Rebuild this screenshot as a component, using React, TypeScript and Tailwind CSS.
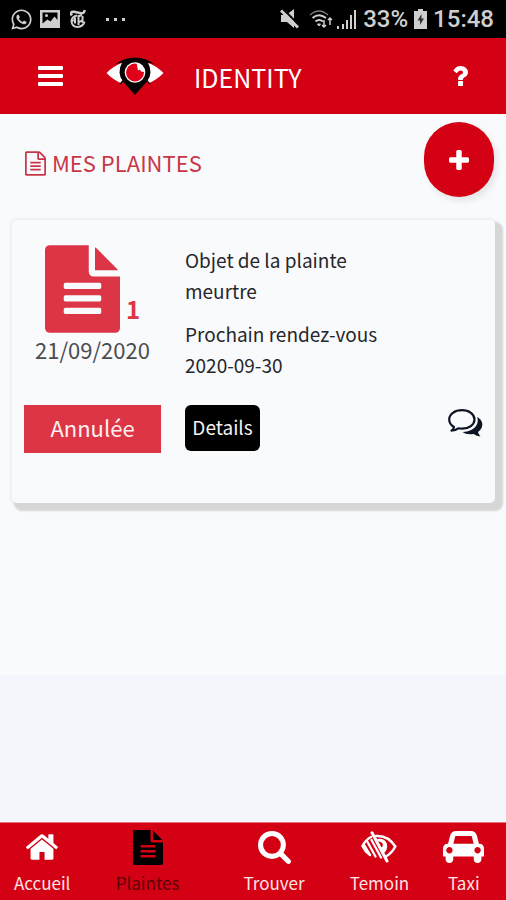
import type { ReactNode } from 'react';
import { FaWhatsapp } from 'react-icons/fa';

type IconProps = { className?: string };

const FILE_PATH =
  'M1596 476q14 14 28 36h-472v-472q22 14 36 28zm-476 164h544v1056q0 40-28 68t-68 28h-1344q-40 0-68-28t-28-68v-1600q0-40 28-68t68-28h800v544q0 40 28 68t68 28zm160 736v-64q0-14-9-23t-23-9h-704q-14 0-23 9t-9 23v64q0 14 9 23t23 9h704q14 0 23-9t9-23zm0-256v-64q0-14-9-23t-23-9h-704q-14 0-23 9t-9 23v64q0 14 9 23t23 9h704q14 0 23-9t9-23zm0-256v-64q0-14-9-23t-23-9h-704q-14 0-23 9t-9 23v64q0 14 9 23t23 9h704q14 0 23-9t9-23z';

function Glyph({ box, d, className }: { box: string; d: string; className?: string }) {
  return (
    <svg viewBox={box} className={className} fill="currentColor" aria-hidden="true">
      <path d={d} />
    </svg>
  );
}

const FileIcon = ({ className }: IconProps) => <Glyph className={className} box="128 0 1536 1792" d={FILE_PATH} />;

const FileOutlineIcon = ({ className }: IconProps) => (
  <Glyph
    className={className}
    box="128 0 1536 1792"
    d="M1596 380q28 28 48 76t20 88v1152q0 40-28 68t-68 28h-1344q-40 0-68-28t-28-68v-1600q0-40 28-68t68-28h896q40 0 88 20t76 48zm-444-244v376h376q-10-29-22-41l-313-313q-12-12-41-22zm384 1528v-1024h-416q-40 0-68-28t-28-68v-416h-768v1536h1280zm-1024-864q0-14 9-23t23-9h704q14 0 23 9t9 23v64q0 14-9 23t-23 9h-704q-14 0-23-9t-9-23v-64zm736 224q14 0 23 9t9 23v64q0 14-9 23t-23 9h-704q-14 0-23-9t-9-23v-64q0-14 9-23t23-9h704zm0 256q14 0 23 9t9 23v64q0 14-9 23t-23 9h-704q-14 0-23-9t-9-23v-64q0-14 9-23t23-9h704z"
  />
);

const HomeIcon = ({ className }: IconProps) => (
  <Glyph
    className={className}
    box="90 250 1612 1290"
    d="M1472 992v480q0 26-19 45t-45 19h-384v-384h-256v384h-384q-26 0-45-19t-19-45v-480q0-1 .5-3t.5-3l575-474 575 474q1 2 1 6zm223-69l-62 74q-8 9-21 11h-3q-13 0-21-7l-692-577-692 577q-12 8-24 7-13-2-21-11l-62-74q-8-10-7-23.5t11-21.5l719-599q32-26 76-26t76 26l244 204v-195q0-14 9-23t23-9h192q14 0 23 9t9 23v408l219 182q10 8 11 21.5t-7 23.5z"
  />
);

const SearchIcon = ({ className }: IconProps) => (
  <Glyph
    className={className}
    box="64 128 1664 1664"
    d="M1216 832q0-185-131.5-316.5t-316.5-131.5-316.5 131.5-131.5 316.5 131.5 316.5 316.5 131.5 316.5-131.5 131.5-316.5zm512 832q0 52-38 90t-90 38q-54 0-90-38l-343-342q-179 124-399 124-143 0-273.5-55.5t-225-150-150-225-55.5-273.5 55.5-273.5 150-225 225-150 273.5-55.5 273.5 55.5 225 150 150 225 55.5 273.5q0 220-124 399l343 343q37 37 37 90z"
  />
);

const LowVisionIcon = ({ className }: IconProps) => (
  <svg viewBox="0 0 36 32" className={className} fill="none" stroke="currentColor" strokeLinecap="round" aria-hidden="true">
    <path strokeWidth="2.500" d="M10 6Q4.500 9 1.500 15Q4 20.500 9 24" />
    <path strokeWidth="2.500" d="M15 5Q27 4 34.300 15.500Q31 22 25 25.500" />
    <path strokeWidth="3" d="M11 1.800L26 30" />
    <path strokeWidth="2.300" d="M10.500 9L20 26.500M6.500 11L14.500 25.500M3.500 14.500L8.500 23" />
    <path fill="currentColor" stroke="none" d="M16 8Q24 7 26 13Q27 20 22 22.500L19 17Q23 16 21.500 12.500Q20 10 17 10.500Z" />
  </svg>
);

const CarIcon = ({ className }: IconProps) => (
  <Glyph
    className={className}
    box="0 128 2048 1600"
    d="M480 1088q0-66-47-113t-113-47-113 47-47 113 47 113 113 47 113-47 47-113zm36-320h1016l-89-357q-2-8-14-17.5t-21-9.5h-768q-9 0-21 9.5t-14 17.5zm1372 320q0-66-47-113t-113-47-113 47-47 113 47 113 113 47 113-47 47-113zm160-96v384q0 14-9 23t-23 9h-96v128q0 80-56 136t-136 56-136-56-56-136v-128h-1024v128q0 80-56 136t-136 56-136-56-56-136v-128h-96q-14 0-23-9t-9-23v-384q0-93 65.5-158.5t158.5-65.5h28l105-419q23-94 104-157.5t179-63.5h768q98 0 179 63.5t104 157.5l105 419h28q93 0 158.5 65.5t65.5 158.5z"
  />
);

const PlusIcon = ({ className }: IconProps) => (
  <Glyph
    className={className}
    box="192 128 1408 1408"
    d="M1600 736v192q0 40-28 68t-68 28h-416v416q0 40-28 68t-68 28h-192q-40 0-68-28t-28-68v-416h-416q-40 0-68-28t-28-68v-192q0-40 28-68t68-28h416v-416q0-40 28-68t68-28h192q40 0 68 28t28 68v416h416q40 0 68 28t28 68z"
  />
);

const HelpIcon = ({ className }: IconProps) => (
  <Glyph
    className={className}
    box="445 256 960 1280"
    d="M1088 1256v240q0 16-12 28t-28 12h-240q-16 0-28-12t-12-28v-240q0-16 12-28t28-12h240q16 0 28 12t12 28zm316-600q0 54-15.5 101t-35 76.5-55 59.5-57.5 43.5-61 35.5q-41 23-68.5 65t-27.5 67q0 17-12 32.5t-28 15.5h-240q-15 0-25.5-18.5t-10.5-37.5v-45q0-83 65-156.5t143-108.5q59-27 84-56t25-76q0-42-46.5-74t-107.5-32q-65 0-108 29-35 25-107 115-13 16-31 16-12 0-25-8l-164-125q-13-10-15.5-25t5.5-28q160-266 464-266 80 0 161 31t146 83 106 127.5 41 158.5z"
  />
);

const BarsIcon = ({ className }: IconProps) => (
  <svg viewBox="0 0 25 20" className={className} fill="currentColor" aria-hidden="true">
    <rect width="25" height="4" rx="1" />
    <rect y="8" width="25" height="4" rx="1" />
    <rect y="16" width="25" height="4" rx="1" />
  </svg>
);

const EyeLogo = ({ className }: IconProps) => (
  <svg viewBox="0 0 58 38" className={className} role="img" aria-label="Identity">
    <path d="M.5 16Q8 8.500 17 5.500V27Q7 23 .5 16ZM57.500 16Q50 8.500 41 5.500V27Q51 23 57.500 16Z" fill="#fff" />
    <path d="M14 27.200L17 22L22 30ZM44 27.200L41 22L36 30Z" fill="#d40013" />
    <path
      d="M9 7.500Q18 .5 29 .5T49 7.500Q45.500 6 42 5.800Q44.500 10 44.500 15.500Q44.300 20.500 41 24.500L29 38L17 24.500Q13.700 20.500 13.500 15.500Q13.500 10 16 5.800Q12.500 6 9 7.500Z"
      fill="#080405"
    />
    <path d="M14 27L17 24M44 27L41 24" stroke="#080405" strokeWidth="1.200" />
    <circle cx="29" cy="15.500" r="10.300" fill="#fff" />
    <circle cx="29" cy="15.500" r="9" fill="#e00018" />
    <path d="M30.500 5.500L32 13.500L34 12.500L35 14.500L39 15A10 10 0 0 0 30.500 5.500Z" fill="#fff" />
  </svg>
);

const ChatIcon = ({ className }: IconProps) => (
  <svg viewBox="0 0 35 28" className={className} aria-hidden="true">
    <path
      d="M14 1.200C6.800 1.200 1.200 5.200 1.200 10.500C1.200 13.500 3 16.200 6 18Q5.500 20.300 3.500 21.700Q7.500 21.500 10.300 19.300Q12 19.700 14 19.700C21 19.700 26.500 15.600 26.500 10.500C26.500 5.200 21 1.200 14 1.200Z"
      fill="none"
      stroke="#0c1424"
      strokeWidth="2.200"
      strokeLinejoin="round"
    />
    <path
      d="M29 8C33 10 34.500 13 34.300 16Q34 20 30 23Q30.500 25.700 32.500 27.500Q28.500 27.300 25.700 25Q18 26 14.500 23C22 23 29.500 19 29.800 11.500Q29.800 9.500 29 8Z"
      fill="#0c1424"
    />
  </svg>
);

function StatusBar() {
  return (
    <div className="flex h-[38px] items-center bg-black pl-[10px] pr-3 text-[#cfcfcf]">
      <FaWhatsapp className="size-[23px]" />
      <svg viewBox="0 0 20 18" className="ml-[7px] h-[18px] w-5" aria-hidden="true">
        <path fill="currentColor" fillRule="evenodd" d="M0 0h20v18H0zM2.500 2.500v11l5-4 3 2 4-5 3 3.500V2.500z" />
        <circle cx="6.500" cy="5.500" r="1.500" fill="currentColor" />
      </svg>
      <svg viewBox="0 0 16 18" className="ml-[10px] h-[18px] w-4" fill="none" stroke="currentColor" aria-hidden="true">
        <path d="M1.800 5.500Q-.5 1.500 4 1.800L11 3.300Q14.500 3.500 14.500 0" strokeWidth="2.600" />
        <path d="M7 5.500Q1.500 7 1.500 11.500Q2 16.800 7.500 17Q13.500 16.500 14.500 11.500" strokeWidth="2" />
        <path d="M5 7.500v6M8.500 5v10M8.500 6.500l3.500-1.800M12.500 6v7M8.500 12.500l4-2.500" strokeWidth="2" />
        <path d="M1.500 11.500l4-2" strokeWidth="1.500" />
      </svg>
      <span className="ml-5 flex gap-[5px]">
        <i className="size-[3px] bg-current" />
        <i className="size-[3px] bg-current" />
        <i className="size-[3px] bg-current" />
      </span>
      <svg viewBox="0 0 19 20" className="ml-auto h-5 w-[19px]" aria-hidden="true">
        <path fill="currentColor" d="M1 6h5l8-6v19l-7-6H1z" />
        <path stroke="#000" strokeWidth="2" d="M3 0l17 17" />
        <path stroke="currentColor" strokeWidth="3" d="M1 1.500l17 17" />
      </svg>
      <svg viewBox="0 0 24 20" className="ml-[10px] h-5 w-6" fill="none" stroke="currentColor" aria-hidden="true">
        <path strokeWidth="1.500" opacity=".6" d="M1 6Q10-2 19 6" />
        <path strokeWidth="2" d="M3.500 9Q10 3.500 17 9M6.500 12.500Q10 9.500 14 12.500" />
        <path fill="currentColor" d="M8.500 15h3L10 17z" />
        <path strokeWidth="1.500" d="M15 11v7M13 16l2 2 2-2M21 16V9M19 11l2-2 2 2" />
      </svg>
      <svg viewBox="0 0 20 20" className="ml-1 h-5 w-5" fill="currentColor" aria-hidden="true">
        <path d="M0 20v-3h2v3zM5 20v-5h2v5zM9 20v-9h2v9zM13 20V6h2v14zM17 20V1h2v19z" />
      </svg>
      <span className="ml-[6px] font-['Roboto',sans-serif] text-[24px] font-medium leading-[38px]">33%</span>
      <svg viewBox="0 0 13 20" className="ml-[6px] h-5 w-[13px]" aria-hidden="true">
        <path fill="currentColor" d="M4 0h5v2h4v18H0V2h4z" />
        <path fill="#333" d="M7.500 5L3.500 11.500h2.500v4.500l4-6.500H7.500z" />
      </svg>
      <span className="ml-[6px] font-['Roboto',sans-serif] text-[24px] font-medium leading-[38px]">15:48</span>
    </div>
  );
}

function NavItem({ label, icon, span, active }: { label: string; icon: ReactNode; span: string; active?: boolean }) {
  return (
    <a
      href="#"
      aria-current={active ? 'page' : undefined}
      className={`${span} flex flex-col items-center ${active ? 'text-black' : 'text-white'}`}
    >
      <span className="flex h-12 items-center justify-center">{icon}</span>
      <span className={`text-[17px] leading-6 ${active ? 'text-[#5c0009]' : 'text-[#ffe3e5]'}`}>{label}</span>
    </a>
  );
}

export default function App() {
  return (
    <div className="flex min-h-screen flex-col bg-[#f5f6fb] font-['Noto_Sans_CJK_SC',sans-serif]">
      <StatusBar />
      <header className="flex h-[76px] items-center bg-[#d40013] pl-[38px] pr-[38px] text-white">
        <button type="button" aria-label="Menu">
          <BarsIcon className="h-5 w-[25px]" />
        </button>
        <EyeLogo className="ml-[43px] h-[38px] w-[58px]" />
        <h1 className="ml-[30px] pt-[2px] text-[25px] leading-9">IDENTITY</h1>
        <button type="button" aria-label="Aide" className="ml-auto">
          <HelpIcon className="h-5 w-[15px]" />
        </button>
      </header>

      <main className="h-[561px] bg-[#f9fafc]">
        <div className="flex items-center justify-between pl-[25px] pr-3 pt-2">
          <h2 className="flex items-center gap-[6px] pt-2 text-[22px] leading-8 text-[#c9364a]">
            <FileOutlineIcon className="h-[25px] w-[21px]" />
            <span className="pb-1">MES PLAINTES</span>
          </h2>
          <button
            type="button"
            aria-label="Ajouter une plainte"
            className="flex h-[75px] w-[70px] items-center justify-center rounded-[35px] bg-[#d40013] text-white shadow-[3px_4px_6px_#e4e4e6]"
          >
            <PlusIcon className="size-5" />
          </button>
        </div>

        <article className="ml-3 mr-[11px] mt-[23px] rounded-[5px] bg-[#f9fafc] px-3 pb-[50px] pt-6 shadow-[5px_5px_2px_3px_#d6d6d7,0_0_4px_#dedfe0]">
          <div className="grid grid-cols-[137px_1fr] gap-x-6">
            <div className="flex flex-col items-center pt-px">
              <div className="flex items-end gap-[6px] text-[#dc3545]">
                <FileIcon className="h-[88px] w-[75px]" />
                <span className="pb-2 text-[24px] font-bold leading-8">1</span>
              </div>
              <time className="text-[22px] leading-8 text-[#4b4c50]">21/09/2020</time>
            </div>
            <dl className="text-[19px] leading-[31px] text-[#26272b]">
              <dt>Objet de la plainte</dt>
              <dd className="mb-3">meurtre</dd>
              <dt>Prochain rendez-vous</dt>
              <dd>2020-09-30</dd>
            </dl>
          </div>
          <div className="mt-[25px] grid grid-cols-[137px_1fr] items-start gap-x-6">
            <span className="bg-[#dc3545] pb-1 text-center text-[22px] leading-[44px] text-[#fff0f1]">Annulée</span>
            <div className="flex items-start justify-between">
              <button type="button" className="h-[46px] w-[75px] rounded-[6px] bg-black pb-[2px] text-[19px] text-[#f2f2f2]">
                Details
              </button>
              <button type="button" aria-label="Messages" className="mt-1">
                <ChatIcon className="h-7 w-[35px]" />
              </button>
            </div>
          </div>
        </article>
      </main>

      <nav className="mt-auto grid h-[78px] grid-cols-12 border-t border-[#e8707c] bg-[#d40013]">
        <NavItem span="col-span-2" label="Accueil" icon={<HomeIcon className="h-[26px] w-8" />} />
        <NavItem span="col-span-3" label="Plaintes" active icon={<FileIcon className="h-[35px] w-[30px]" />} />
        <NavItem span="col-span-3" label="Trouver" icon={<SearchIcon className="size-[33px]" />} />
        <NavItem span="col-span-2" label="Temoin" icon={<LowVisionIcon className="h-8 w-9" />} />
        <NavItem span="col-span-2" label="Taxi" icon={<CarIcon className="h-8 w-[41px]" />} />
      </nav>
    </div>
  );
}
